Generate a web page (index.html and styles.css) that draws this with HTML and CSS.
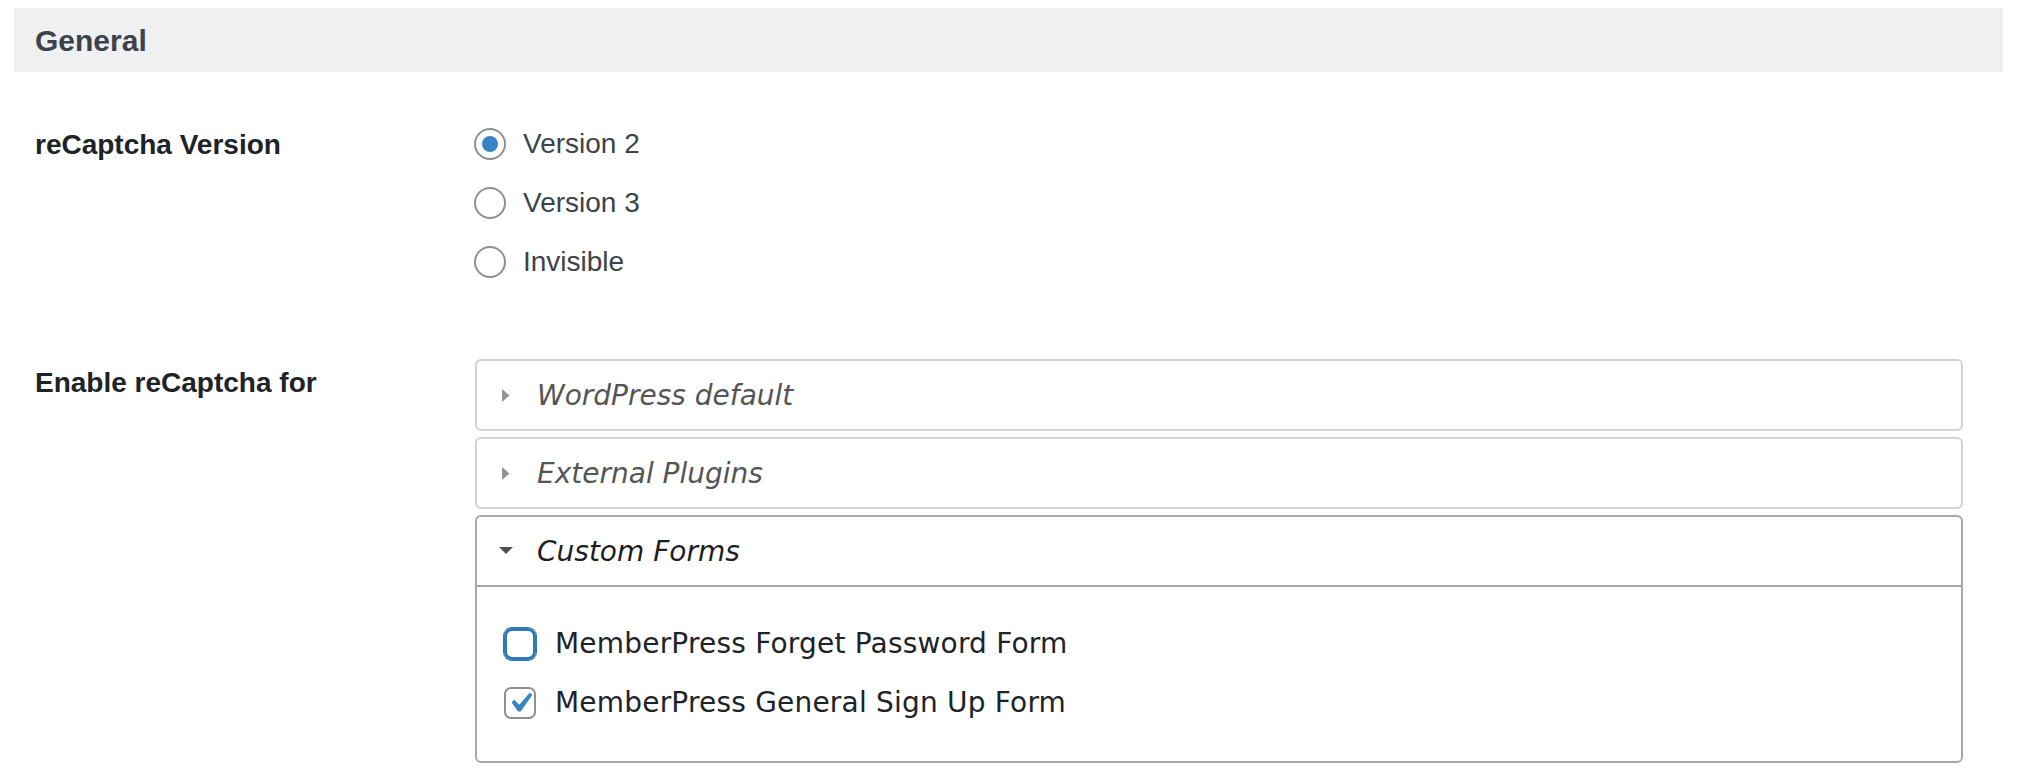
FILE: index.html
```html
<!DOCTYPE html>
<html lang="en">
<head>
<meta charset="utf-8">
<title>reCaptcha Settings</title>
<link rel="stylesheet" href="styles.css">
</head>
<body>
<div class="page">
  <h2 class="section-title">General</h2>

  <div class="form-row row-version">
    <div class="row-label">reCaptcha Version</div>
    <div class="radio-list">
      <label class="radio-item"><span class="radio checked"></span><span>Version 2</span></label>
      <label class="radio-item"><span class="radio"></span><span>Version 3</span></label>
      <label class="radio-item"><span class="radio"></span><span>Invisible</span></label>
    </div>
  </div>

  <div class="form-row row-enable">
    <div class="row-label">Enable reCaptcha for</div>
    <div class="accordion">
      <div class="acc">
        <div class="acc-head">
          <span class="caret"><svg width="8" height="13" viewBox="0 0 8 13"><polygon points="0,0 7.5,6.5 0,13" fill="#939393"/></svg></span>
          <span>WordPress default</span>
        </div>
      </div>
      <div class="acc">
        <div class="acc-head">
          <span class="caret"><svg width="8" height="13" viewBox="0 0 8 13"><polygon points="0,0 7.5,6.5 0,13" fill="#939393"/></svg></span>
          <span>External Plugins</span>
        </div>
      </div>
      <div class="acc open">
        <div class="acc-head">
          <span class="caret"><svg width="14" height="8" viewBox="0 0 14 8"><polygon points="0,0 14,0 7,7" fill="#505050"/></svg></span>
          <span>Custom Forms</span>
        </div>
        <div class="acc-body">
          <label class="check-item"><span class="checkbox focus"></span><span>MemberPress Forget Password Form</span></label>
          <label class="check-item"><span class="checkbox checked"><svg viewBox="0 0 20 20"><path d="M14.83 4.89l1.34.94-5.81 8.38H9.02L5.78 9.67l1.34-1.25 2.57 2.4z" fill="#3582c4"/></svg></span><span>MemberPress General Sign Up Form</span></label>
        </div>
      </div>
    </div>
  </div>
</div>
</body>
</html>
```
FILE: styles.css
```css
html, body {
  margin: 0;
  padding: 0;
  background: #ffffff;
}

body {
  font-family: "Liberation Sans", Arial, sans-serif;
  color: #1d2327;
}

.page {
  padding: 8px 19px 0 14px;
}

.section-title {
  margin: 0;
  height: 64px;
  box-sizing: border-box;
  padding-top: 2px;
  background: #f0f0f0;
  display: flex;
  align-items: center;
  padding-left: 21px;
  font-size: 30px;
  font-weight: 700;
  color: #3c434a;
}

.form-row {
  display: grid;
  grid-template-columns: 461px 1488px;
}

.row-label {
  padding-left: 21px;
  font-size: 28px;
  font-weight: 700;
  line-height: 32px;
  color: #1d2327;
}

.row-version .row-label {
  padding-top: 57px;
}

.radio-list {
  padding-top: 42px;
  display: flex;
  flex-direction: column;
}

.radio-item {
  display: flex;
  align-items: center;
  gap: 17px;
  height: 59px;
  font-size: 28px;
  color: #3c434a;
  margin-left: -1px;
}

.radio {
  width: 32px;
  height: 32px;
  box-sizing: border-box;
  border: 2px solid #8c8f94;
  border-radius: 50%;
  display: flex;
  align-items: center;
  justify-content: center;
  flex-shrink: 0;
}

.radio.checked::before {
  content: "";
  width: 16px;
  height: 16px;
  border-radius: 50%;
  background: #3582c4;
}

.row-enable {
  padding-top: 68px;
}

.row-enable .row-label {
  padding-top: 8px;
}

.accordion {
  display: flex;
  flex-direction: column;
  gap: 6px;
}

.acc {
  border: 2px solid #d3d3d3;
  border-radius: 6px;
}

.acc-head {
  height: 68px;
  display: flex;
  align-items: center;
  padding-left: 22px;
  font-family: "DejaVu Sans", Verdana, sans-serif;
  font-style: italic;
  font-size: 28px;
  color: #555555;
}

.caret {
  width: 14px;
  height: 14px;
  display: flex;
  align-items: center;
  justify-content: center;
  margin-right: 24px;
}

.caret svg {
  display: block;
}

.acc.open {
  border-color: #a8a8a8;
}

.acc.open .acc-head {
  border-bottom: 2px solid #a8a8a8;
  color: #1e1e1e;
}

.acc-body {
  padding: 27px 0 29px 27px;
  display: flex;
  flex-direction: column;
}

.check-item {
  display: flex;
  align-items: center;
  gap: 19px;
  height: 59px;
  font-family: "DejaVu Sans", Verdana, sans-serif;
  font-size: 28px;
  letter-spacing: 0.2px;
  color: #1d2327;
}

.checkbox {
  width: 32px;
  height: 32px;
  box-sizing: border-box;
  border: 2px solid #8c8f94;
  border-radius: 7px;
  display: flex;
  align-items: center;
  justify-content: center;
  flex-shrink: 0;
}

.checkbox.focus {
  border: 3px solid #2f78b7;
  box-shadow: 0 0 0 1px #2f78b7;
  border-radius: 8px;
}

.checkbox.checked svg {
  width: 40px;
  height: 40px;
  flex-shrink: 0;
  margin: -6px;
}
```
